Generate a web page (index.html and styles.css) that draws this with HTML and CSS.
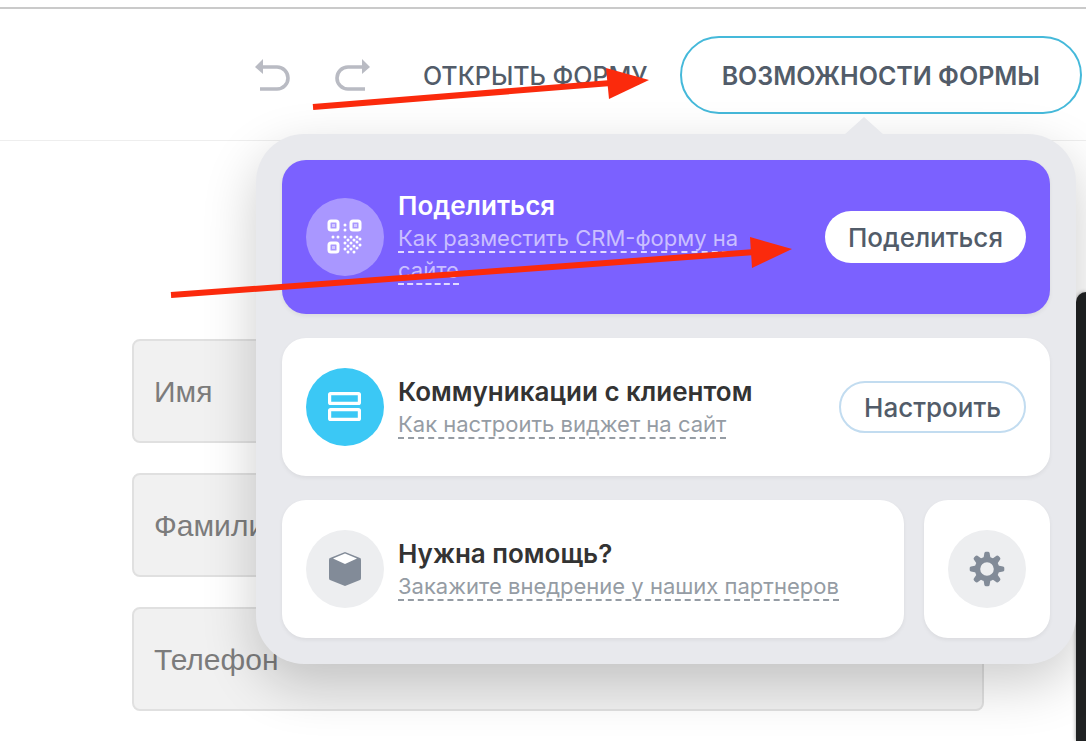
FILE: index.html
```html
<!DOCTYPE html>
<html lang="ru">
<head>
    <meta charset="UTF-8">
    <meta name="viewport" content="width=device-width, initial-scale=1.0">
    <title>CRM-форма</title>
    <link rel="stylesheet" href="styles.css">
</head>
<body>

<!-- Toolbar -->
<header class="toolbar">
    <div class="history">
        <button class="history-btn" type="button" aria-label="Отменить">
            <svg width="36" height="32" viewBox="0 0 36 32">
                <path d="M7 8H22A11 11 0 0 1 22 30H5" fill="none" stroke="#b9bbc3" stroke-width="3.600"/>
                <path d="M0 8L8 0V15Z" fill="#b9bbc3"/>
            </svg>
        </button>
        <button class="history-btn" type="button" aria-label="Вернуть">
            <svg width="36" height="32" viewBox="0 0 36 32">
                <path d="M28 8H13A11 11 0 0 0 13 30H30" fill="none" stroke="#b9bbc3" stroke-width="3.600"/>
                <path d="M35 8L27 0V15Z" fill="#b9bbc3"/>
            </svg>
        </button>
    </div>
    <a href="#form" class="open-link">Открыть форму</a>
    <button class="features-btn" type="button">Возможности формы</button>

    <!-- Features popup -->
    <div class="popup">
        <section class="card card-share">
            <span class="icon icon-share">
                <svg width="36" height="36" viewBox="0 0 36 36">
                    <g fill="none" stroke="#fff" stroke-width="3">
                        <rect x="2" y="2" width="9" height="9" rx="2"/>
                        <rect x="24" y="2" width="9" height="9" rx="2"/>
                        <rect x="2" y="24" width="9" height="9" rx="2"/>
                    </g>
                    <g fill="#fff">
                        <path d="M5 5h3v3h-3zM27 5h3v3h-3zM5 27h3v3h-3z" opacity=".5"/>
                        <circle cx="18" cy="6" r="1.500"/><circle cx="18" cy="11" r="1.500"/>
                        <circle cx="6" cy="18" r="1.500"/><circle cx="11" cy="18" r="1.500"/>
                        <circle cx="18" cy="18" r="1.500"/><circle cx="24" cy="18" r="1.500"/><circle cx="30" cy="18" r="1.500"/>
                        <circle cx="21" cy="21" r="1.500"/><circle cx="27" cy="21" r="1.500"/><circle cx="33" cy="20" r="1.500"/>
                        <circle cx="18" cy="24" r="1.500"/><circle cx="24" cy="24" r="1.500"/><circle cx="30" cy="23" r="1.500"/>
                        <circle cx="21" cy="27" r="1.500"/><circle cx="27" cy="27" r="1.500"/><circle cx="33" cy="26" r="1.500"/>
                        <circle cx="18" cy="30" r="1.500"/><circle cx="24" cy="30" r="1.500"/><circle cx="30" cy="29" r="1.500"/>
                        <circle cx="21" cy="33" r="1.500"/><circle cx="27" cy="33" r="1.500"/>
                    </g>
                </svg>
            </span>
            <div class="card-text">
                <h2>Поделиться</h2>
                <a href="#share">Как разместить CRM-форму на сайте</a>
            </div>
            <button class="card-btn" type="button">Поделиться</button>
        </section>

        <section class="card">
            <span class="icon icon-widget">
                <svg width="34" height="30" viewBox="0 0 34 30">
                    <g fill="none" stroke="#fff" stroke-width="3.200">
                        <rect x="1.600" y="1.600" width="29.800" height="9.800" rx="1"/>
                        <rect x="1.600" y="17.600" width="29.800" height="9.800" rx="1"/>
                    </g>
                </svg>
            </span>
            <div class="card-text">
                <h2>Коммуникации с клиентом</h2>
                <a href="#widget">Как настроить виджет на сайт</a>
            </div>
            <button class="card-btn card-btn-outline" type="button">Настроить</button>
        </section>

        <div class="card-row">
            <section class="card card-help">
                <span class="icon">
                    <svg width="32" height="34" viewBox="0 0 32 34">
                        <path d="M16 0L31 6Q32 6 32 8V26Q32 28 31 28L16 34L1 28Q0 28 0 26V8Q0 6 1 6Z" fill="#828b98"/>
                        <path d="M16 1.500L28 6.500L16 12L4 6.500Z" fill="#fff"/>
                    </svg>
                </span>
                <div class="card-text">
                    <h2>Нужна помощь?</h2>
                    <a href="#partners">Закажите внедрение у наших партнеров</a>
                </div>
            </section>
            <button class="card card-settings" type="button" aria-label="Настройки">
                <span class="icon">
                    <svg width="36" height="36" viewBox="-18 -18 36 36">
                        <circle r="9.500" fill="none" stroke="#828b98" stroke-width="5.400"/>
                        <g fill="#828b98">
                            <path id="tooth" d="M-3.500 -11L-2.600 -16Q-2.200 -17.300 -1 -17.300H1Q2.200 -17.300 2.600 -16L3.500 -11Z"/>
                            <use href="#tooth" transform="rotate(45)"/>
                            <use href="#tooth" transform="rotate(90)"/>
                            <use href="#tooth" transform="rotate(135)"/>
                            <use href="#tooth" transform="rotate(180)"/>
                            <use href="#tooth" transform="rotate(225)"/>
                            <use href="#tooth" transform="rotate(270)"/>
                            <use href="#tooth" transform="rotate(315)"/>
                        </g>
                    </svg>
                </span>
            </button>
        </div>
    </div>

    <!-- Pointers -->
    <svg class="pointer pointer-features" width="338" height="44" viewBox="0 0 338 44" aria-hidden="true">
        <path d="M2 39L300 15" stroke="#fb2a0c" stroke-width="6"/>
        <path d="M295 0L338 12L298 31Z" fill="#fb2a0c"/>
    </svg>
    <svg class="pointer pointer-share" width="622" height="64" viewBox="0 0 622 64" aria-hidden="true">
        <path d="M1 58L585 15" stroke="#fb2a0c" stroke-width="6"/>
        <path d="M580 0L622 12L582 31Z" fill="#fb2a0c"/>
    </svg>
</header>

<!-- Form preview -->
<main class="form" id="form">
    <input type="text" placeholder="Имя" aria-label="Имя">
    <input type="text" placeholder="Фамилия" aria-label="Фамилия">
    <input type="text" placeholder="Телефон" aria-label="Телефон">
</main>

<aside class="side-panel"></aside>

</body>
</html>
```
FILE: styles.css
```css
* {
    margin: 0;
    padding: 0;
    box-sizing: border-box;
}

body {
    position: relative;
    min-height: 100vh;
    padding-top: 7px;
    overflow: hidden;
    background: #fff;
    color: #333;
    font-family: Inter, "Liberation Sans", sans-serif;
}

button {
    border: none;
    background: none;
    font-family: inherit;
    cursor: pointer;
}

svg {
    display: block;
}

/* Toolbar */
.toolbar {
    position: relative;
    display: flex;
    justify-content: flex-end;
    align-items: center;
    height: 134px;
    padding-right: 4px;
    border-top: 2px solid #cacaca;
    border-bottom: 1px solid #eee;
}

.history {
    display: flex;
    gap: 44px;
    margin-right: 52px;
}

.open-link {
    margin-right: 32px;
    padding-top: 2px;
    color: #525c69;
    font-size: 25px;
    font-weight: 500;
    text-decoration: none;
    text-transform: uppercase;
}

.features-btn {
    height: 78px;
    padding: 2px 40px 0;
    border: 2px solid #45b9da;
    border-radius: 39px;
    color: #525c69;
    font-size: 25px;
    font-weight: 600;
    text-transform: uppercase;
}

/* Popup */
.popup {
    position: absolute;
    z-index: 2;
    top: 125px;
    right: 10px;
    display: flex;
    flex-direction: column;
    gap: 24px;
    width: 820px;
    padding: 26px;
    border-radius: 48px;
    background: #e8e9ed;
    box-shadow: 0 20px 54px rgba(0, 0, 0, 0.2);
}

.popup::before {
    content: "";
    position: absolute;
    top: -17px;
    right: 192px;
    width: 40px;
    height: 18px;
    background: #e8e9ed;
    clip-path: polygon(50% 0, 100% 100%, 0 100%);
}

.card {
    display: flex;
    align-items: center;
    gap: 14px;
    min-height: 138px;
    padding: 24px;
    border-radius: 24px;
    background: #fff;
    box-shadow: 0 2px 4px rgba(0, 0, 0, 0.06);
}

.card-share {
    min-height: 154px;
    background: #7b61ff;
}

.card-row {
    display: flex;
    gap: 20px;
}

.card-help {
    flex: 1;
}

.icon {
    display: flex;
    flex: none;
    justify-content: center;
    align-items: center;
    width: 78px;
    height: 78px;
    border-radius: 50%;
    background: #edeef0;
}

.icon-share {
    background: #a997ff;
}

.icon-widget {
    background: #3bc8f5;
}

.card-text {
    flex: 1;
    padding-top: 2px;
    font-size: 22px;
    line-height: 32px;
}

.card-text h2 {
    font-size: 26px;
    font-weight: 600;
    line-height: 32px;
}

.card-text a {
    border-bottom: 2px dashed #959ca4;
    color: #959ca4;
    text-decoration: none;
}

.card-share h2 {
    color: #fff;
}

.card-share a {
    border-color: #e0daff;
    color: #cabfff;
}

.card-btn {
    height: 52px;
    margin-left: 24px;
    padding: 0 23px;
    border-radius: 26px;
    background: #fff;
    color: #525c69;
    font-size: 26px;
    font-weight: 500;
}

.card-btn-outline {
    border: 2px solid #c2dcf0;
}

/* Pointers */
.pointer {
    position: absolute;
    z-index: 3;
}

.pointer-features {
    top: 59px;
    right: 437px;
}

.pointer-share {
    top: 228px;
    right: 294px;
}

/* Form preview */
.form {
    display: flex;
    flex-direction: column;
    gap: 30px;
    margin: 198px 102px 0 132px;
}

.form input {
    width: 100%;
    height: 104px;
    padding: 2px 20px 0;
    border: 2px solid #e0e0e0;
    border-radius: 8px;
    background: #f1f1f1;
    font-family: "Liberation Sans", Arial, sans-serif;
    font-size: 30px;
}

.form input::placeholder {
    color: #7c7c7c;
}

.side-panel {
    position: absolute;
    top: 292px;
    right: 0;
    bottom: 0;
    width: 10px;
    border-top-left-radius: 12px;
    background: #202223;
    box-shadow: 0 0 4px rgba(0, 0, 0, 0.4);
}
```
